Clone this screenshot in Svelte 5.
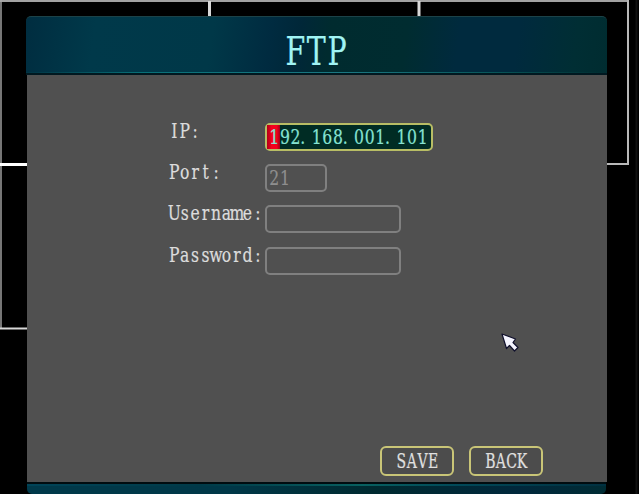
<script>
  const fields = [
    { label: 'IP:', value: '192.168.001.101', kind: 'active', width: 168 },
    { label: 'Port:', value: '21', kind: 'disabled', width: 62 },
    { label: 'Username:', value: '', kind: '', width: 136 },
    { label: 'Password:', value: '', kind: '', width: 136 }
  ];

  // Centre of every character cell, in the horizontally scaled system.
  function cells(text, pitch, scale) {
    return [...text]
      .map((c, i) => ((i + 0.5) * pitch - (c === '.' ? 3.3 : 0)) / scale)
      .join(' ');
  }
</script>

{#snippet glyphs(text, pitch, size, scale, height, baseline)}
  <svg class="glyphs" width={text.length * pitch} {height}>
    <text
      transform="scale({scale} 1)"
      x={cells(text, pitch, scale)}
      y={baseline}
      font-size={size}
      text-anchor="middle">{text}</text>
  </svg>
{/snippet}

<main class="screen">
  <svg class="channels" width="639" height="494" fill="none" stroke="#d8d8d8">
    <path d="M0 1H628" stroke-width="1.6" />
    <path d="M209.5 1V16M419 1V16" stroke-width="3" />
    <path d="M628 0V164H606" stroke="#b9b9b9" stroke-width="2" />
    <path d="M1 0V328.500" stroke="#aaa" stroke-width="1.400" />
    <path d="M0 164.500H27" stroke="#fff" stroke-width="3" />
    <path d="M0 328.500H27" stroke-width="2" />
    <path d="M636.500 0V494" stroke="#111" stroke-width="2" />
  </svg>

  <section class="dialog">
    <header>
      {@render glyphs('FTP', 20.8, 38.5, 0.74, 58, 48)}
    </header>
    <form onsubmit={(e) => e.preventDefault()}>
      <div class="fields">
        {#each fields as f}
          <div class="row">
            <div class="label">{@render glyphs(f.label, 10.45, 19.5, 0.8, 28, 15)}</div>
            <div class="box {f.kind}" style="width: {f.width}px">
              {#if f.kind === 'active'}<i class="caret"></i>{/if}
              {#if f.value}{@render glyphs(f.value, 10.6, 19.6, 0.8, 24, 19.5)}{/if}
            </div>
          </div>
        {/each}
      </div>
      <div class="actions">
        <button type="button">{@render glyphs('SAVE', 10.6, 20, 0.7, 26, 20.5)}</button>
        <button type="button">{@render glyphs('BACK', 10.6, 20, 0.7, 26, 20.5)}</button>
      </div>
    </form>
    <footer></footer>
  </section>

  <svg class="pointer" width="22" height="24" viewBox="0 0 22 24">
    <path
      d="M2 2L15.500 7L13 10.500L18 15.500L14.500 19L9.500 13.500L6.500 16.500Z"
      fill="#f4f4ff"
      stroke="#10102c"
      stroke-width="1.200"
      stroke-linejoin="round" />
  </svg>
</main>

<style>
  :global(body) {
    background: #000;
    overflow: hidden;
  }
  .screen {
    position: relative;
    display: flex;
    align-items: flex-start;
    box-sizing: border-box;
    width: 639px;
    height: 494px;
    padding: 16px 0 0 26px;
    background: #000;
    overflow: hidden;
    font-family: 'DejaVu Serif', 'Liberation Serif', serif;
  }
  .channels {
    position: absolute;
    top: 0;
    left: 0;
  }
  .dialog {
    position: relative;
    width: 581px;
    height: 478px;
    display: flex;
    flex-direction: column;
  }
  header {
    box-sizing: border-box;
    height: 59px;
    display: flex;
    padding-left: 259px;
    border-top: 1px solid #1c4248;
    border-radius: 5px 5px 0 0;
    background:
      linear-gradient(#001820, #001820) 0 100% / 100% 2px no-repeat,
      linear-gradient(90deg, #003444, #087078 20%, #1b7882 55%, #08565a 80%, #002c30) 0 55px / 100% 1px no-repeat,
      linear-gradient(98deg, #002d40 0, #00394a 12%, #003848 32%, #002b40 42%, #002738 47%, #002b2f 52%, #002c30 65%, #002a3e 74%, #002a3e 84%, #002e34 94%, #002c30);
    color: #a0f4f4;
  }
  form {
    flex: 1;
    box-sizing: border-box;
    display: flex;
    flex-direction: column;
    justify-content: space-between;
    margin-left: 1px;
    padding: 48px 64px 6px 142px;
    background: #505050;
    color: #dcdcdc;
  }
  .fields {
    display: flex;
    flex-direction: column;
    gap: 13.200px;
  }
  .row {
    display: flex;
    height: 28px;
  }
  .label {
    width: 96px;
  }
  .box {
    position: relative;
    box-sizing: border-box;
    height: 28px;
    padding-left: 2px;
    border: 2px solid #808080;
    border-radius: 5px;
  }
  .box.active {
    border-color: #b8bd65;
    background: #002c24;
    color: #86e2d2;
  }
  .box.disabled {
    color: #8e8e8e;
  }
  .caret {
    position: absolute;
    top: 0;
    left: 0;
    width: 13px;
    height: 24px;
    background: linear-gradient(90deg, #b00018, #f4001c 35%, #f4001c 75%, #a00018);
  }
  .glyphs {
    display: block;
    position: relative;
    overflow: visible;
  }
  text {
    fill: currentColor;
    stroke: currentColor;
    stroke-width: 0.2px;
  }
  .actions {
    display: flex;
    justify-content: flex-end;
    gap: 15px;
  }
  button {
    display: flex;
    justify-content: center;
    box-sizing: border-box;
    width: 74px;
    height: 30px;
    padding: 0;
    border: 2px solid #c9c577;
    border-radius: 6px;
    background: #4c4c4c;
    color: #e0e0e0;
    font-family: inherit;
  }
  footer {
    height: 12px;
    margin: 0 1px;
    border-radius: 0 0 5px 5px;
    background:
      linear-gradient(#000c10, #000c10) 0 0 / 100% 2px no-repeat,
      linear-gradient(90deg, #004458, #003a48 30%, #086060 58%, #004858 75%, #003040) 0 2px / 100% 2px no-repeat,
      linear-gradient(90deg, #00394a, #003848 35%, #002a30 60%, #00283c 85%, #002c34);
  }
  .pointer {
    position: absolute;
    left: 500px;
    top: 332px;
  }
</style>
